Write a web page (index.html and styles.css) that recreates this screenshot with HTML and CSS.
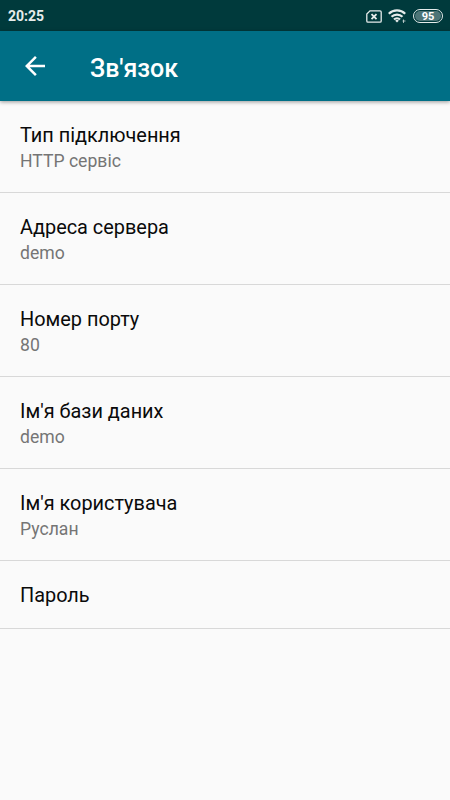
FILE: index.html
```html
<!DOCTYPE html>
<html lang="uk">

<head>
    <meta charset="UTF-8">
    <meta name="viewport" content="width=device-width, initial-scale=1.0">
    <title>Зв'язок</title>
    <link rel="stylesheet" href="styles.css">
</head>

<body>
    <div class="status-bar">
        <span class="time">20:25</span>
        <div class="status-icons">
            <svg class="sim" width="16" height="13" viewBox="0 0 16 13" fill="none" stroke="#e6eceb" stroke-width="1.3">
                <path d="M4 .8H14a1.2 1.2 0 0 1 1.2 1.2v9a1.2 1.2 0 0 1-1.2 1.2H2A1.2 1.2 0 0 1 .8 11V4z" />
                <path stroke-width="1.8" d="M5.5 4.1l5 5M10.5 4.1L5.5 9.1" />
            </svg>
            <svg class="wifi" width="18" height="14" viewBox="0 0 18 14" fill="none" stroke="#e6eceb" stroke-width="2.2">
                <path d="M.8 4.8a11.7 11.7 0 0 1 16.4 0M3.5 7.8a7.8 7.8 0 0 1 11 0M6 10.5a4.2 4.2 0 0 1 6 0" />
                <path fill="#e6eceb" stroke="none" d="M7.2 11.7a2.6 2.6 0 0 1 3.6 0L9 13.5z" />
                <path stroke-width="1" opacity=".7" d="M15.5 10.5v3.5M14.5 12h3" />
            </svg>
            <span class="battery"><span class="level">95</span></span>
        </div>
    </div>

    <header class="toolbar">
        <svg class="back" width="30" height="30" viewBox="0 0 24 24" fill="#fff">
            <path d="M20 11H7.83l5.59-5.59L12 4l-8 8 8 8 1.41-1.41L7.83 13H20v-2z" />
        </svg>
        <h1>Зв'язок</h1>
    </header>

    <ul class="settings">
        <li class="item">
            <h2>Тип підключення</h2>
            <p>HTTP сервіс</p>
        </li>
        <li class="item">
            <h2>Адреса сервера</h2>
            <p>demo</p>
        </li>
        <li class="item">
            <h2>Номер порту</h2>
            <p>80</p>
        </li>
        <li class="item">
            <h2>Ім'я бази даних</h2>
            <p>demo</p>
        </li>
        <li class="item">
            <h2>Ім'я користувача</h2>
            <p>Руслан</p>
        </li>
        <li class="item">
            <h2>Пароль</h2>
        </li>
    </ul>
</body>

</html>
```

FILE: styles.css
```css
* {
    margin: 0;
    padding: 0;
    box-sizing: border-box;
}

body {
    min-height: 100vh;
    font-family: Roboto, sans-serif;
    background-color: #fafafa;
}

.status-bar {
    display: flex;
    justify-content: space-between;
    align-items: center;
    height: 31px;
    padding: 1px 7px 0 8px;
    background-color: #003a3c;
    color: #e6eceb;
}

.time {
    font-size: 14px;
    font-weight: 700;
}

.status-icons {
    display: flex;
    align-items: center;
    gap: 6px;
}

.battery {
    width: 30px;
    height: 14px;
    margin-left: 1px;
    padding: 1px;
    border: 1.5px solid #e6eceb;
    border-radius: 7px;
}

.level {
    display: block;
    height: 10px;
    border-radius: 5px;
    background-color: #4d7577;
    color: #fff;
    font-size: 11px;
    font-weight: 700;
    line-height: 11px;
    text-align: center;
}

.toolbar {
    display: flex;
    align-items: center;
    height: 70px;
    padding-left: 20px;
    background-color: #006f86;
    color: #fff;
    box-shadow: 0 1px 4px rgba(0, 0, 0, 0.4);
}

.toolbar h1 {
    margin: 4px 0 0 40px;
    font-size: 25px;
    font-weight: 500;
}

.settings {
    list-style: none;
}

.item {
    padding: 21px 20px 19px;
    border-bottom: 1px solid #d8d8d8;
}

.item h2 {
    font-size: 19.9px;
    font-weight: 400;
    line-height: 27px;
    color: #0a0a0a;
}

.item p {
    margin-top: 1px;
    font-size: 17.6px;
    line-height: 23px;
    color: #757575;
}
```
